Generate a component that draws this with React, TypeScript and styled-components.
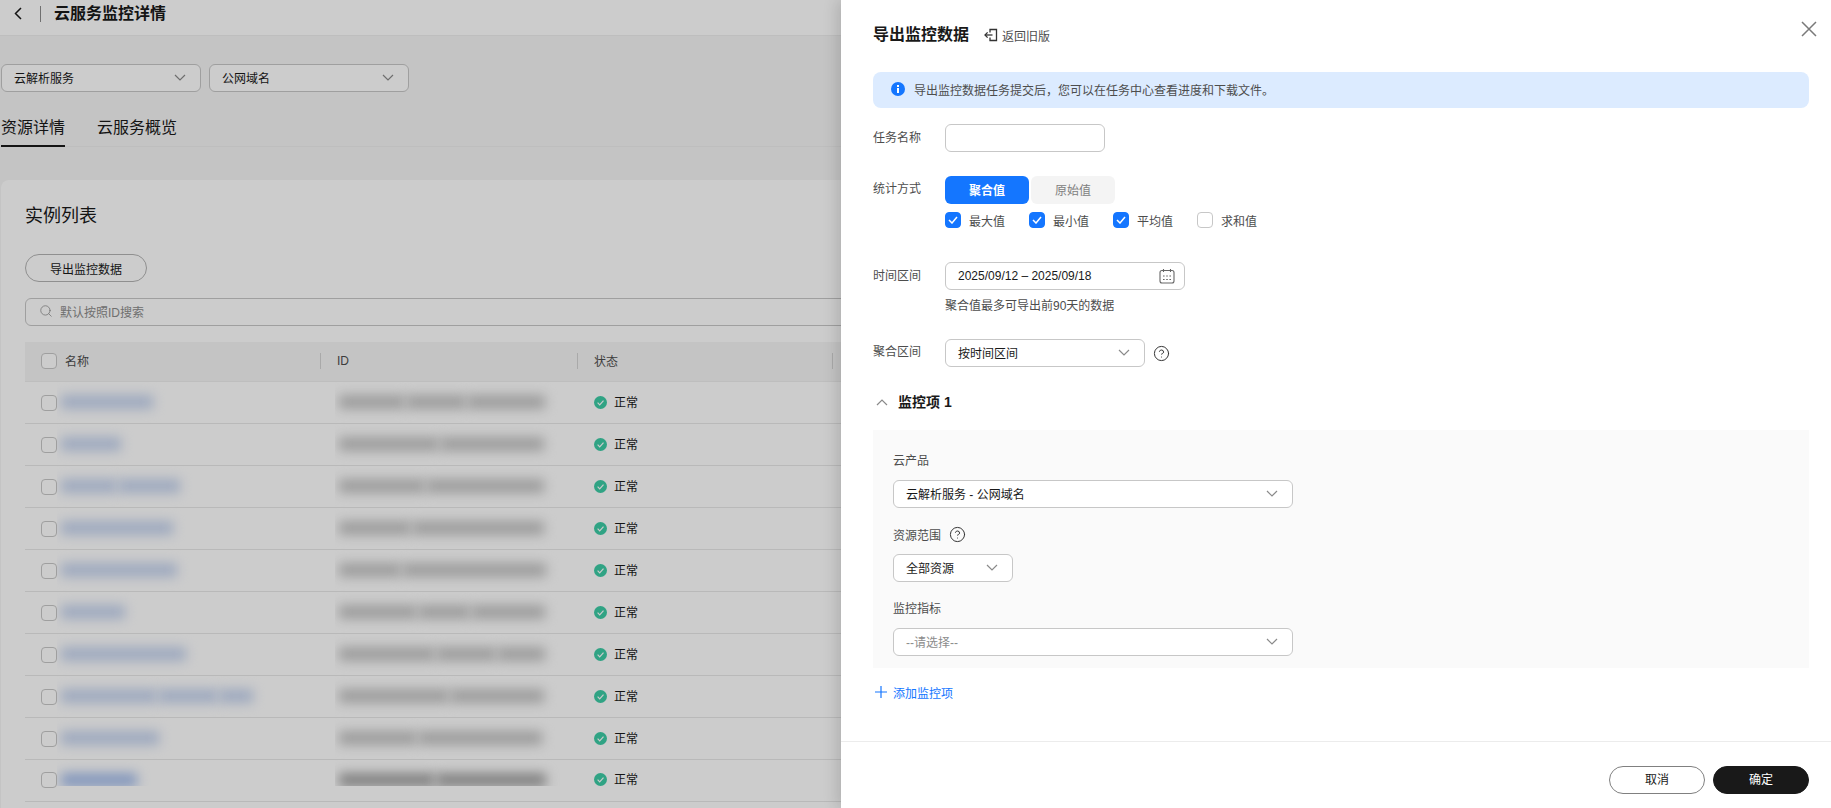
import React from 'react';
import styled, { createGlobalStyle } from 'styled-components';
import { CircleHelp, Search } from 'lucide-react';

const GlobalStyle = createGlobalStyle`
  html, body {
    margin: 0;
    padding: 0;
    background: #f5f5f5;
  }
  * {
    box-sizing: border-box;
  }
  body {
    font-family: "Liberation Sans", "Noto Sans CJK SC", sans-serif;
    font-size: 12px;
    color: #191919;
  }
`;

const Screen = styled.div`
  position: relative;
  width: 1831px;
  height: 808px;
  overflow: hidden;
  background: #f5f5f5;
`;

const TopBar = styled.div`
  display: flex;
  align-items: center;
  height: 36px;
  padding: 0 0 8px 14px;
  background: #ffffff;
  border-bottom: 1px solid #eeeeee;
`;

const TopDivider = styled.div`
  width: 1px;
  height: 16px;
  margin: 0 13px 0 18px;
  background: #8c8c8c;
`;

const PageTitle = styled.div`
  font-size: 16px;
  font-weight: 700;
  line-height: 20px;
`;

const FilterRow = styled.div`
  display: flex;
  gap: 8px;
  margin-top: 28px;
  padding-left: 1px;
`;

const SelectBox = styled.div<{ $width: number }>`
  display: flex;
  align-items: center;
  justify-content: space-between;
  flex: none;
  width: ${(p) => p.$width}px;
  height: 28px;
  padding: 0 14px 2px 12px;
  background: #ffffff;
  border: 1px solid #c7c7c7;
  border-radius: 6px;
  font-size: 12px;
`;

const DateBox = styled(SelectBox)`
  padding: 0 9px 0 12px;
`;

const Placeholder = styled.span`
  color: #8c8c8c;
`;

const Tabs = styled.div`
  display: flex;
  gap: 32px;
  height: 38px;
  margin-top: 17px;
  padding-left: 1px;
  box-shadow: inset 0 -1px 0 #eeeeee;
`;

const Tab = styled.div<{ $active?: boolean }>`
  height: 38px;
  font-size: 16px;
  line-height: 38px;
  color: #191919;
  border-bottom: 2px solid ${(p) => (p.$active ? '#191919' : 'transparent')};
`;

const Card = styled.div`
  margin: 33px 0 0 1px;
  padding: 24px 0 0 24px;
  height: 640px;
  background: #ffffff;
  border-radius: 8px 0 0 0;
`;

const CardTitle = styled.div`
  font-size: 18px;
  line-height: 24px;
`;

const GhostButton = styled.div`
  display: flex;
  align-items: center;
  justify-content: center;
  width: 122px;
  height: 28px;
  margin-top: 26px;
  border: 1px solid #b3b3b3;
  border-radius: 14px;
  font-size: 12px;
`;

const SearchBar = styled.div`
  display: flex;
  align-items: center;
  gap: 7px;
  height: 28px;
  margin-top: 16px;
  padding: 0 0 2px 13px;
  border: 1px solid #c7c7c7;
  border-radius: 6px;
  color: #8c8c8c;
  font-size: 12px;
`;

const Table = styled.div`
  margin-top: 16px;
`;

const HeadRow = styled.div`
  display: grid;
  grid-template-columns: 295px 257px 255px 1fr;
  height: 40px;
  background: #f5f5f5;
  border-bottom: 1px solid #eeeeee;
  color: #4d4d4d;
  font-size: 12px;
`;

const HeadCell = styled.div`
  position: relative;
  display: flex;
  align-items: center;
  gap: 8px;
  padding: 0 0 2px 16px;

  & + & {
    padding-left: 17px;
  }

  & + &::before {
    content: '';
    position: absolute;
    left: 0;
    top: 11px;
    width: 1px;
    height: 16px;
    background: #d4d4d4;
  }
`;

const BodyRow = styled.div`
  display: grid;
  grid-template-columns: 295px 257px 255px 1fr;
  height: 42px;
  border-bottom: 1px solid #e8e8e8;
`;

const NameCell = styled.div`
  display: flex;
  align-items: center;
  padding: 0 0 2px 16px;
`;

const IdCell = styled.div`
  display: flex;
  align-items: center;
  padding-left: 15px;
`;

const StatusCell = styled.div`
  display: flex;
  align-items: center;
  gap: 7px;
  padding: 0 0 2px 17px;
  font-size: 12px;
`;

const StatusText = styled.span`
  margin-bottom: 2px;
`;

const Smudge = styled.div<{ $clip: number }>`
  display: flex;
  flex: none;
  align-self: flex-start;
  gap: 1px;
  width: 250px;
  height: ${(p) => p.$clip}px;
  padding: 13px 0 0 4px;
  overflow: hidden;
`;

const NameBlur = styled.div<{ $strong?: boolean }>`
  flex: none;
  height: 14px;
  background: ${(p) => (p.$strong ? '#a4bdec' : '#c6d4ef')};
  filter: blur(6px);
`;

const IdBlur = styled.div<{ $strong?: boolean }>`
  flex: none;
  height: 14px;
  background: ${(p) => (p.$strong ? '#a2a2a2' : '#c4c4c4')};
  filter: blur(6px);
`;

const BoxCheck = styled.span<{ $checked?: boolean }>`
  display: inline-flex;
  align-items: center;
  justify-content: center;
  flex: none;
  width: 16px;
  height: 16px;
  background: ${(p) => (p.$checked ? '#1476ff' : '#ffffff')};
  border: 1px solid ${(p) => (p.$checked ? '#1476ff' : '#c7c7c7')};
  border-radius: 4px;
`;

const Mask = styled.div`
  position: absolute;
  inset: 0;
  background: rgba(0, 0, 0, 0.2);
`;

const Drawer = styled.div`
  position: absolute;
  top: 0;
  right: 0;
  bottom: 0;
  display: flex;
  flex-direction: column;
  width: 990px;
  background: #ffffff;
  box-shadow: -4px 0 14px rgba(0, 0, 0, 0.14);
`;

const DrawerHead = styled.div`
  display: flex;
  align-items: center;
  flex: none;
  height: 72px;
  padding: 0 22px 2px 32px;
`;

const DrawerTitle = styled.div`
  font-size: 16px;
  font-weight: 700;
  line-height: 20px;
`;

const BackLink = styled.div`
  display: flex;
  align-items: center;
  gap: 4px;
  margin-left: 15px;
  font-size: 12px;
  color: #4d4d4d;
`;

const CloseButton = styled.div`
  position: absolute;
  top: 21px;
  right: 14px;
  width: 16px;
  height: 16px;
`;

const DrawerBody = styled.div`
  flex: 1;
  padding: 0 22px 0 32px;
`;

const Notice = styled.div`
  display: flex;
  align-items: center;
  gap: 9px;
  height: 36px;
  padding: 0 0 2px 18px;
  background: #dcebff;
  border-radius: 8px;
  color: #4d4d4d;
  font-size: 12px;
`;

const FormRow = styled.div<{ $top: number }>`
  display: grid;
  grid-template-columns: 72px 1fr;
  margin-top: ${(p) => p.$top}px;
`;

const FormLabel = styled.div<{ $tight?: boolean }>`
  font-size: 12px;
  line-height: ${(p) => (p.$tight ? 27 : 28)}px;
  color: #4d4d4d;
`;

const FieldLine = styled.div`
  display: flex;
  align-items: center;
  gap: 8px;
`;

const TextInput = styled.div<{ $width: number }>`
  width: ${(p) => p.$width}px;
  height: 28px;
  background: #ffffff;
  border: 1px solid #c7c7c7;
  border-radius: 6px;
`;

const Segments = styled.div`
  display: flex;
  gap: 2px;
`;

const Segment = styled.div<{ $active?: boolean }>`
  display: flex;
  align-items: center;
  justify-content: center;
  width: 84px;
  height: 28px;
  padding-bottom: 2px;
  border-radius: 6px;
  background: ${(p) => (p.$active ? '#1476ff' : '#f4f4f4')};
  color: ${(p) => (p.$active ? '#ffffff' : '#808080')};
  font-weight: ${(p) => (p.$active ? 700 : 400)};
  font-size: 12px;
`;

const CheckRow = styled.div`
  display: flex;
  margin-top: 8px;
`;

const CheckItem = styled.div`
  display: flex;
  align-items: center;
  gap: 8px;
  width: 84px;
  height: 16px;
  font-size: 12px;
  color: #4d4d4d;
`;

const Hint = styled.div`
  margin-top: 8px;
  font-size: 12px;
  line-height: 16px;
  color: #4d4d4d;
`;

const ItemHead = styled.div`
  display: flex;
  align-items: center;
  gap: 10px;
  height: 20px;
  margin-top: 25px;
  padding-left: 3px;
  font-size: 14px;
  font-weight: 700;
`;

const ItemTitle = styled.span`
  margin-bottom: 3px;
`;

const ItemPanel = styled.div`
  margin-top: 18px;
  padding: 22px 0 12px 20px;
  background: #fafafa;
`;

const PanelLabel = styled.div<{ $top?: number; $bottom?: number }>`
  display: flex;
  align-items: center;
  gap: 8px;
  height: 16px;
  margin-top: ${(p) => p.$top ?? 0}px;
  margin-bottom: ${(p) => p.$bottom ?? 11}px;
  padding-bottom: 2px;
  font-size: 12px;
  color: #4d4d4d;
`;

const AddLink = styled.div`
  display: flex;
  align-items: center;
  gap: 6px;
  height: 16px;
  margin-top: 17px;
  padding: 0 0 2px 2px;
  color: #1476ff;
  font-size: 12px;
`;

const DrawerFoot = styled.div`
  display: flex;
  justify-content: flex-end;
  gap: 8px;
  flex: none;
  height: 67px;
  padding: 24px 22px 0 0;
  border-top: 1px solid #ececec;
`;

const FootButton = styled.div<{ $primary?: boolean }>`
  display: flex;
  align-items: center;
  justify-content: center;
  width: 96px;
  height: 28px;
  padding-bottom: 3px;
  border-radius: 14px;
  border: 1px solid ${(p) => (p.$primary ? '#191919' : '#808080')};
  background: ${(p) => (p.$primary ? '#191919' : '#ffffff')};
  color: ${(p) => (p.$primary ? '#ffffff' : '#191919')};
  font-size: 12px;
`;

const Chevron = ({ up }: { up?: boolean }) => (
  <svg width="12" height="7" viewBox="0 0 12 7" fill="none" stroke="#8a8a8a" strokeWidth="1.2">
    <path d={up ? 'M1 6l5-5 5 5' : 'M1 1l5 5 5-5'} />
  </svg>
);

const BackArrow = () => (
  <svg width="8" height="13" viewBox="0 0 8 13" fill="none" stroke="#191919" strokeWidth="1.5">
    <path d="M7 1L1.5 6.5 7 12" />
  </svg>
);

const Tick = () => (
  <svg width="10" height="8" viewBox="0 0 10 8" fill="none" stroke="#ffffff" strokeWidth="1.5">
    <path d="M1 4l3 3 5-6" />
  </svg>
);

const StatusOk = () => (
  <svg width="13" height="13" viewBox="0 0 13 13">
    <circle cx="6.5" cy="6.5" r="6.5" fill="#3dcca6" />
    <path d="M3.6 6.7l2.1 2.1 3.8-4.2" fill="none" stroke="#ffffff" strokeWidth="1.2" />
  </svg>
);

const InfoIcon = () => (
  <svg width="14" height="14" viewBox="0 0 14 14">
    <circle cx="7" cy="7" r="7" fill="#1476ff" />
    <rect x="6" y="3" width="2" height="2" fill="#ffffff" />
    <rect x="6" y="6" width="2" height="5" fill="#ffffff" />
  </svg>
);

const ReturnIcon = () => (
  <svg width="14" height="14" viewBox="0 0 14 14" fill="none" stroke="#333333" strokeWidth="1.3">
    <path d="M6 4.5v-3h6.5v11H6v-3" />
    <path d="M1 7h7.5" />
    <path d="M3.6 4.4L1 7l2.6 2.6" />
  </svg>
);

const CalendarIcon = () => (
  <svg width="16" height="16" viewBox="0 0 16 16" fill="none" stroke="#666666" strokeWidth="1.1">
    <rect x="1" y="2.5" width="14" height="12.5" rx="2" />
    <path d="M4.5 1v3M11.5 1v3" />
    <path d="M4 8h1.6M7.2 8h1.6M10.4 8H12M4 11.5h1.6M7.2 11.5h1.6M10.4 11.5H12" />
  </svg>
);

const CloseIcon = () => (
  <svg width="16" height="16" viewBox="0 0 16 16" fill="none" stroke="#7a7a7a" strokeWidth="1.5">
    <path d="M1 1l14 14M15 1L1 15" />
  </svg>
);

const PlusIcon = () => (
  <svg width="12" height="12" viewBox="0 0 12 12" fill="none" stroke="#1476ff" strokeWidth="1.2">
    <path d="M6 0v12M0 6h12" />
  </svg>
);

const nameBlurs = [
  [92],
  [60],
  [56, 62],
  [112],
  [116],
  [64],
  [125],
  [96, 60, 34],
  [98],
  [76],
];

const idBlurs = [
  [66, 60, 78],
  [100, 104],
  [86, 118],
  [72, 132],
  [62, 144],
  [78, 52, 74],
  [96, 60, 48],
  [110, 94],
  [78, 124],
  [96, 110],
];

const App: React.FC = () => {
  return (
    <Screen>
      <GlobalStyle />
      <TopBar>
        <BackArrow />
        <TopDivider />
        <PageTitle>云服务监控详情</PageTitle>
      </TopBar>
      <FilterRow>
        <SelectBox $width={200}>
          云解析服务
          <Chevron />
        </SelectBox>
        <SelectBox $width={200}>
          公网域名
          <Chevron />
        </SelectBox>
      </FilterRow>
      <Tabs>
        <Tab $active>资源详情</Tab>
        <Tab>云服务概览</Tab>
      </Tabs>
      <Card>
        <CardTitle>实例列表</CardTitle>
        <GhostButton>导出监控数据</GhostButton>
        <SearchBar>
          <Search size={14} strokeWidth={1.3} color="#8c8c8c" />
          默认按照ID搜索
        </SearchBar>
        <Table>
          <HeadRow>
            <HeadCell>
              <BoxCheck />
              名称
            </HeadCell>
            <HeadCell>ID</HeadCell>
            <HeadCell>状态</HeadCell>
            <HeadCell />
          </HeadRow>
          {nameBlurs.map((segments, i) => {
            const last = i === nameBlurs.length - 1;
            return (
              <BodyRow key={i}>
                <NameCell>
                  <BoxCheck />
                  <Smudge $clip={last ? 26 : 41}>
                    {segments.map((w, j) => (
                      <NameBlur key={j} $strong={last} style={{ width: w }} />
                    ))}
                  </Smudge>
                </NameCell>
                <IdCell>
                  <Smudge $clip={last ? 26 : 41}>
                    {idBlurs[i].map((w, j) => (
                      <IdBlur key={j} $strong={last} style={{ width: w }} />
                    ))}
                  </Smudge>
                </IdCell>
                <StatusCell>
                  <StatusOk />
                  <StatusText>正常</StatusText>
                </StatusCell>
                <div />
              </BodyRow>
            );
          })}
        </Table>
      </Card>
      <Mask />
      <Drawer>
        <DrawerHead>
          <DrawerTitle>导出监控数据</DrawerTitle>
          <BackLink>
            <ReturnIcon />
            返回旧版
          </BackLink>
        </DrawerHead>
        <CloseButton>
          <CloseIcon />
        </CloseButton>
        <DrawerBody>
          <Notice>
            <InfoIcon />
            导出监控数据任务提交后，您可以在任务中心查看进度和下载文件。
          </Notice>
          <FormRow $top={16}>
            <FormLabel>任务名称</FormLabel>
            <TextInput $width={160} />
          </FormRow>
          <FormRow $top={24}>
            <FormLabel $tight>统计方式</FormLabel>
            <div>
              <Segments>
                <Segment $active>聚合值</Segment>
                <Segment>原始值</Segment>
              </Segments>
              <CheckRow>
                <CheckItem>
                  <BoxCheck $checked>
                    <Tick />
                  </BoxCheck>
                  最大值
                </CheckItem>
                <CheckItem>
                  <BoxCheck $checked>
                    <Tick />
                  </BoxCheck>
                  最小值
                </CheckItem>
                <CheckItem>
                  <BoxCheck $checked>
                    <Tick />
                  </BoxCheck>
                  平均值
                </CheckItem>
                <CheckItem>
                  <BoxCheck />
                  求和值
                </CheckItem>
              </CheckRow>
            </div>
          </FormRow>
          <FormRow $top={34}>
            <FormLabel>时间区间</FormLabel>
            <div>
              <DateBox $width={240}>
                2025/09/12 – 2025/09/18
                <CalendarIcon />
              </DateBox>
              <Hint>聚合值最多可导出前90天的数据</Hint>
            </div>
          </FormRow>
          <FormRow $top={25}>
            <FormLabel $tight>聚合区间</FormLabel>
            <FieldLine>
              <SelectBox $width={200}>
                按时间区间
                <Chevron />
              </SelectBox>
              <CircleHelp size={17} strokeWidth={1.4} color="#333333" />
            </FieldLine>
          </FormRow>
          <ItemHead>
            <Chevron up />
            <ItemTitle>监控项 1</ItemTitle>
          </ItemHead>
          <ItemPanel>
            <PanelLabel $bottom={12}>云产品</PanelLabel>
            <SelectBox $width={400}>
              云解析服务 - 公网域名
              <Chevron />
            </SelectBox>
            <PanelLabel $top={19}>
              资源范围
              <CircleHelp size={17} strokeWidth={1.4} color="#333333" />
            </PanelLabel>
            <SelectBox $width={120}>
              全部资源
              <Chevron />
            </SelectBox>
            <PanelLabel $top={18} $bottom={12}>监控指标</PanelLabel>
            <SelectBox $width={400}>
              <Placeholder>--请选择--</Placeholder>
              <Chevron />
            </SelectBox>
          </ItemPanel>
          <AddLink>
            <PlusIcon />
            添加监控项
          </AddLink>
        </DrawerBody>
        <DrawerFoot>
          <FootButton>取消</FootButton>
          <FootButton $primary>确定</FootButton>
        </DrawerFoot>
      </Drawer>
    </Screen>
  );
};

export default App;
